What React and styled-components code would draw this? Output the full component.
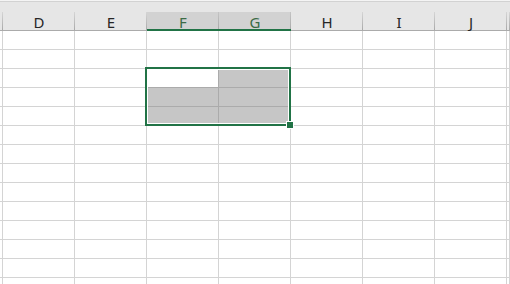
import React from 'react';
import styled, { createGlobalStyle, css } from 'styled-components';

const GlobalStyle = createGlobalStyle`
  html, body {
    margin: 0;
    padding: 0;
    background: #ffffff;
    overflow: hidden;
  }
  body {
    font-family: "Noto Sans", "Open Sans", sans-serif;
  }
`;

const GREEN = '#217346';
const COL_W = 72;
const ROW_H = 19;
const LEAD_W = 3;

const Sheet = styled.div`
  position: relative;
  width: 510px;
  height: 284px;
  overflow: hidden;
  background: #fff;
`;

const TopStrip = styled.div`
  height: 12px;
  background: linear-gradient(#f4f4f4 0 1px, #d2d2d2 1px 2px, #e6e6e6 2px);
`;

const Grid = styled.div`
  display: grid;
  grid-template-columns: ${LEAD_W}px repeat(7, ${COL_W}px) 1fr;
  grid-auto-rows: ${ROW_H}px;
`;

const HeadCell = styled.div`
  box-sizing: border-box;
  height: ${ROW_H}px;
  line-height: 20px;
  text-align: center;
  font-size: 15px;
  color: #262626;
  border-bottom: 1px solid #ababab;
  background: linear-gradient(to bottom, #d6d6d6, #a9a9a9) right top / 1px 100% no-repeat,
    #e6e6e6;
  ${(p) =>
    p.$selected &&
    css`
      color: #3b6b46;
      border-bottom-color: ${GREEN};
      box-shadow: inset 0 -1px 0 ${GREEN};
      background: linear-gradient(to bottom, #c4c4c4, #a9a9a9) right top / 1px 100% no-repeat,
        #d2d2d2;
    `}
`;

const Cell = styled.div`
  box-sizing: border-box;
  border-right: 1px solid #d4d4d4;
  border-bottom: 1px solid #d4d4d4;
  background: #fff;
  ${(p) =>
    p.$inRange &&
    css`
      border-color: #ababab;
    `}
  ${(p) =>
    p.$filled &&
    css`
      background: #c6c6c6;
    `}
`;

const Selection = styled.div`
  position: absolute;
  box-sizing: border-box;
  border: 2px solid ${GREEN};
  box-shadow: inset 0 0 0 1px #fff;
  pointer-events: none;
`;

const FillHandle = styled.div`
  position: absolute;
  box-sizing: border-box;
  width: 8px;
  height: 8px;
  border: 1px solid #fff;
  background: ${GREEN};
`;

const columns = ['', 'D', 'E', 'F', 'G', 'H', 'I', 'J', ''];
const selCols = [3, 4];
const selRows = [3, 4, 5];
const active = { row: 3, col: 3 };
const ROWS = 14;

export default function App() {
  const top = 12 + ROW_H + (selRows[0] - 1) * ROW_H - 2;
  const left = LEAD_W + (selCols[0] - 1) * COL_W - 2;
  const width = selCols.length * COL_W + 2;
  const height = selRows.length * ROW_H + 2;

  return (
    <Sheet>
      <GlobalStyle />
      <TopStrip />
      <Grid>
        {columns.map((c, i) => (
          <HeadCell key={'h' + i} $selected={selCols.includes(i)}>
            {c}
          </HeadCell>
        ))}
        {Array.from({ length: ROWS }).map((_, r) =>
          columns.map((_, c) => {
            const row = r + 1;
            const inRange = selRows.includes(row) && selCols.includes(c);
            const isActive = row === active.row && c === active.col;
            return (
              <Cell
                key={r + '-' + c}
                $inRange={inRange}
                $filled={inRange && !isActive}
              />
            );
          })
        )}
      </Grid>
      <Selection style={{ left, top, width, height }} />
      <FillHandle style={{ left: left + width - 5, top: top + height - 5 }} />
    </Sheet>
  );
}
